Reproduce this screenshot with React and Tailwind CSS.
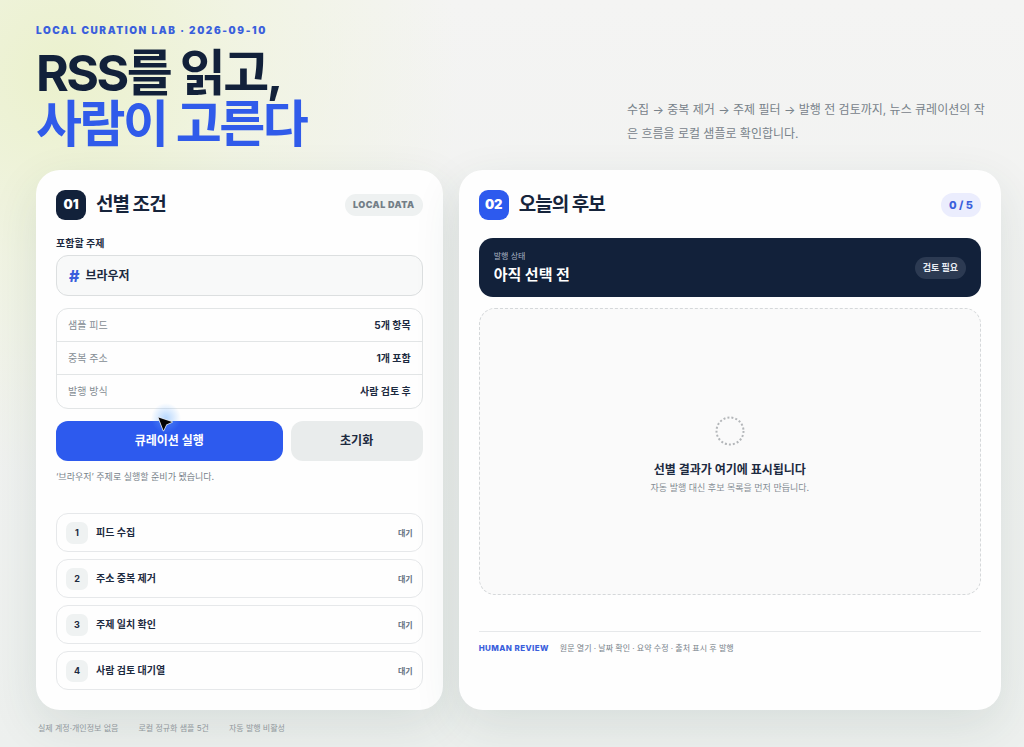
import React, { useState } from "react";

const facts = [
  ["샘플 피드", "5개 항목"],
  ["중복 주소", "1개 포함"],
  ["발행 방식", "사람 검토 후"],
];

const steps = ["피드 수집", "주소 중복 제거", "주제 일치 확인", "사람 검토 대기열"];

const notes = ["실제 계정·개인정보 없음", "로컬 정규화 샘플 5건", "자동 발행 비활성"];

function Header() {
  return (
    <header className="flex items-end justify-between gap-8">
      <div>
        <p className="text-[10px] leading-3 font-black tracking-[0.16em] text-[#3a5fdc]">
          LOCAL CURATION LAB · 2026-09-10
        </p>
        <h1 className="mt-3 text-[50px] leading-[51px] font-bold tracking-tighter whitespace-nowrap text-[#12213a]">
          RSS를 읽고,
          <span className="block text-[#305bea]">사람이 고른다</span>
        </h1>
      </div>
      <p className="mr-2 mb-1 w-[366px] text-xs leading-6 break-all text-[#78828a]">
        수집 → 중복 제거 → 주제 필터 → 발행 전 검토까지, 뉴스 큐레이션의 작은 흐름을 로컬 샘플로 확인합니다.
      </p>
    </header>
  );
}

function Card({ children }) {
  return (
    <section className="flex flex-col rounded-3xl bg-[#fefefe] p-5 shadow-[0_16px_48px_rgba(40,70,65,0.11)]">
      {children}
    </section>
  );
}

function CardHead({ number, title, badgeClass, children }) {
  return (
    <div className="flex items-center gap-2.5">
      <span className={"flex size-[30px] items-center justify-center rounded-[9px] text-[13px] font-black text-white " + badgeClass}>
        {number}
      </span>
      <h2 className="flex-1 text-[19px] leading-[30px] font-bold tracking-tighter text-[#16243b]">{title}</h2>
      {children}
    </div>
  );
}

function Pointer() {
  return (
    <span className="pointer-events-none absolute -top-5 left-[88px] size-10">
      <svg viewBox="0 0 40 40" className="size-10" aria-hidden="true">
        <defs>
          <radialGradient id="glow">
            <stop offset="0" stopColor="#6fb0ff" stopOpacity="0.5" />
            <stop offset="1" stopColor="#6fb0ff" stopOpacity="0" />
          </radialGradient>
        </defs>
        <circle cx="22" cy="17" r="15" fill="url(#glow)" />
        <path d="M14.5 16.5 L28 21 L22.3 23.5 L19.5 29.5 Z" fill="#050505" stroke="#dfe6f2" strokeWidth="1.6" strokeLinejoin="round" paintOrder="stroke" />
      </svg>
    </span>
  );
}

function Conditions() {
  const [topic, setTopic] = useState("브라우저");
  return (
    <Card>
      <CardHead number="01" title="선별 조건" badgeClass="bg-[#12213a]">
        <span className="rounded-full bg-[#eef1f1] px-2 text-[9px] leading-[22px] font-black tracking-wider text-[#737e87]">
          LOCAL DATA
        </span>
      </CardHead>

      <label htmlFor="topic" className="mt-[15px] text-[10px] leading-4 font-bold text-[#1c2a40]">
        포함할 주제
      </label>
      <div className="mt-1 flex h-[41px] items-center gap-1.5 rounded-xl border border-[#dcdfe0] bg-[#f8f9f9] px-3">
        <span className="text-base font-extrabold text-[#3a5fdc]">#</span>
        <input
          id="topic"
          value={topic}
          onChange={(e) => setTopic(e.target.value)}
          className="min-w-0 flex-1 bg-transparent text-xs font-bold text-[#1c2a40] outline-none"
        />
      </div>

      <dl className="mt-3 divide-y divide-[#e2e5e6] rounded-xl border border-[#e2e5e6]">
        {facts.map(([name, value]) => (
          <div key={name} className="flex h-[33px] items-center justify-between px-[11px] text-[10px]">
            <dt className="text-[#858d94]">{name}</dt>
            <dd className="font-bold text-[#1c2a40]">{value}</dd>
          </div>
        ))}
      </dl>

      <div className="relative mt-3 grid grid-cols-[12fr_7fr] gap-2">
        <button type="button" className="h-10 rounded-xl bg-[#2d5aee] text-xs font-bold text-white">
          큐레이션 실행
        </button>
        <button type="button" className="h-10 rounded-xl bg-[#e9ecec] text-xs font-bold text-[#1c2a40]">
          초기화
        </button>
        <Pointer />
      </div>

      <p className="mt-2 text-[9px] leading-4 text-[#78828a]">‘브라우저’ 주제로 실행할 준비가 됐습니다.</p>

      <ol className="mt-7 flex flex-col gap-[7px]">
        {steps.map((step, i) => (
          <li key={step} className="flex h-[39px] items-center gap-2 rounded-xl border border-[#e6e8ea] px-[9px] text-[#1c2a40]">
            <span className="flex size-[22px] items-center justify-center rounded-[7px] bg-[#eff2f2] text-[9px] font-bold">
              {i + 1}
            </span>
            <span className="flex-1 text-[10px] font-bold">{step}</span>
            <span className="text-[8px] font-bold text-[#65717f]">대기</span>
          </li>
        ))}
      </ol>
    </Card>
  );
}

function Candidates() {
  return (
    <Card>
      <CardHead number="02" title="오늘의 후보" badgeClass="bg-[#2d5aee]">
        <span className="rounded-full bg-[#ebedfd] px-2 text-[11px] leading-6 font-extrabold text-[#3a5fdc]">0 / 5</span>
      </CardHead>

      <div className="mt-[18px] flex h-[59px] items-center justify-between rounded-[14px] bg-[#12213a] px-[15px]">
        <div>
          <p className="text-[8px] leading-3 text-[#aab3c2]">발행 상태</p>
          <p className="mt-0.5 text-[15px] leading-[22px] font-bold text-white">아직 선택 전</p>
        </div>
        <span className="rounded-full bg-[#2c3a52] px-2 text-[9px] leading-[22px] font-bold text-[#e8ecf2]">검토 필요</span>
      </div>

      <div className="mt-[11px] flex h-[287px] flex-col items-center justify-center rounded-2xl border border-dashed border-[#d5d8da] bg-[#fafafa] pt-2">
        <svg viewBox="0 0 30 30" className="size-[30px]" aria-hidden="true">
          <circle cx="15" cy="15" r="13.5" fill="none" stroke="#b3b6b9" strokeWidth="2" strokeDasharray="2 2.039" />
        </svg>
        <p className="mt-3.5 text-xs leading-5 font-bold text-[#1c2a40]">선별 결과가 여기에 표시됩니다</p>
        <p className="text-[9px] leading-4 text-[#858d94]">자동 발행 대신 후보 목록을 먼저 만듭니다.</p>
      </div>

      <div className="mt-9 flex items-center gap-[11px] border-t border-[#e6e8ea] pt-2">
        <strong className="text-[8px] leading-4 font-extrabold tracking-wider text-[#3a5fdc]">HUMAN REVIEW</strong>
        <span className="text-[8px] leading-4 text-[#78828a]">원문 열기 · 날짜 확인 · 요약 수정 · 출처 표시 후 발행</span>
      </div>
    </Card>
  );
}

export default function App() {
  return (
    <div className="min-h-screen bg-[#f3f3f2] bg-[radial-gradient(circle_at_6%_10%,#ebf1cd_0%,rgba(240,244,222,0.75)_16%,rgba(243,243,242,0)_34%),linear-gradient(#f4f4f3,#edf0ee)] pt-6 pr-[23px] pb-3 pl-9 font-[Inter,'Noto_Sans_CJK_KR',sans-serif]">
      <Header />
      <main className="mt-5 grid grid-cols-[3fr_4fr] gap-4">
        <Conditions />
        <Candidates />
      </main>
      <footer className="mt-2.5 flex gap-5 px-0.5 text-[8px] leading-4 text-[#90979c]">
        {notes.map((note) => (
          <span key={note}>{note}</span>
        ))}
      </footer>
    </div>
  );
}
